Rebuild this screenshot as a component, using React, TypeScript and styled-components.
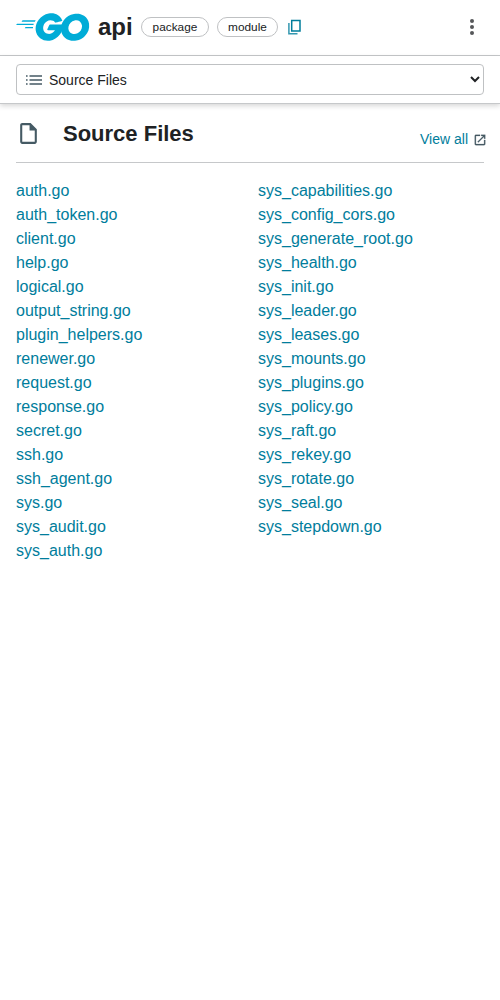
import React from "react";
import styled, { createGlobalStyle } from "styled-components";

const GlobalStyle = createGlobalStyle`
  *, *::before, *::after { box-sizing: border-box; }
  body {
    margin: 0;
    background: #fff;
    color: #202224;
    font-family: "Liberation Sans", Arial, sans-serif;
    font-size: 16px;
    line-height: 24px;
  }
`;

const Header = styled.header`
  height: 56px;
  padding: 0 16px 1px;
  display: flex;
  align-items: center;
  border-bottom: 1px solid #c6c8ca;
`;
const Logo = styled.svg`
  display: block;
  width: 73.5px;
  height: 28px;
  flex: none;
`;
const PackageName = styled.h1`
  margin: 0 8.5px;
  font-size: 24px;
  line-height: 30px;
  font-weight: 700;
`;
const Chip = styled.span`
  height: 20px;
  margin-right: 8px;
  padding: 0 10.4px;
  border: 1px solid #bfc1c3;
  border-radius: 10px;
  font-size: 11.84px;
  line-height: 18px;
`;
const IconButton = styled.button<{ $push?: boolean }>`
  display: flex;
  padding: 0;
  border: 0;
  background: none;
  margin: ${(p) => (p.$push ? "0 0 0 auto" : "0")};
`;
const NavBar = styled.nav`
  height: 48px;
  padding: 8px 16px;
  border-bottom: 1px solid #c6c8ca;
  box-shadow: 0 2px 5px rgba(0, 0, 0, 0.16);
`;
const SelectWrap = styled.div`
  position: relative;
`;
const SelectIcon = styled.svg`
  position: absolute;
  left: 8px;
  top: 6px;
  pointer-events: none;
`;
const Select = styled.select`
  display: block;
  width: 100%;
  height: 31px;
  padding: 0 0 0 28px;
  border: 1px solid #bfc1c3;
  border-radius: 4px;
  background: #fff;
  color: #202224;
  font: 14px "Liberation Sans", Arial, sans-serif;
`;
const Main = styled.main`
  padding: 0 16px;
`;
const SectionHead = styled.div`
  height: 59px;
  display: flex;
  align-items: center;
  border-bottom: 1px solid #c6c8ca;
`;
const Title = styled.h2`
  margin: 2px auto 0 22px;
  font-size: 22px;
  line-height: 28px;
  font-weight: 700;
`;
const ViewAll = styled.a`
  display: flex;
  align-items: center;
  gap: 5px;
  margin: 12px -3px 0 0;
  color: #007d9c;
  font-size: 14px;
  line-height: 20px;
`;
const ExternalIcon = styled.svg`
  display: block;
  margin-top: 1px;
`;
const FileList = styled.ul`
  margin: 16px 0 0;
  padding: 0;
  list-style: none;
  columns: 2;
  column-gap: 16px;
`;
const FileItem = styled.li`
  height: 24px;
  color: #007d9c;
`;

const files = [
  "auth.go", "auth_token.go", "client.go", "help.go", "logical.go", "output_string.go",
  "plugin_helpers.go", "renewer.go", "request.go", "response.go", "secret.go", "ssh.go",
  "ssh_agent.go", "sys.go", "sys_audit.go", "sys_auth.go", "sys_capabilities.go",
  "sys_config_cors.go", "sys_generate_root.go", "sys_health.go", "sys_init.go",
  "sys_leader.go", "sys_leases.go", "sys_mounts.go", "sys_plugins.go", "sys_policy.go",
  "sys_raft.go", "sys_rekey.go", "sys_rotate.go", "sys_seal.go", "sys_stepdown.go",
];

const GoLogo = () => (
  <Logo viewBox="0 0 207 78" preserveAspectRatio="none" fill="#00acd7" fillRule="evenodd" aria-label="Go">
    <path d="m16.2 24.1c-.4 0-.5-.2-.3-.5l2.1-2.7c.2-.3.7-.5 1.1-.5h35.7c.4 0 .5.3.3.6l-1.7 2.6c-.2.3-.7.6-1 .6z" />
    <path d="m1.1 33.3c-.4 0-.5-.2-.3-.5l2.1-2.7c.2-.3.7-.5 1.1-.5h45.6c.4 0 .6.3.5.6l-.8 2.4c-.1.4-.5.6-.9.6z" />
    <path d="m25.3 42.5c-.4 0-.5-.3-.3-.6l1.4-2.5c.2-.3.6-.6 1-.6h20c.4 0 .6.3.6.7l-.2 2.4c0 .4-.4.7-.7.7z" />
    <g transform="translate(55)">
      <path d="m74.1 22.3c-6.3 1.6-10.6 2.8-16.8 4.4-1.5.4-1.6.5-2.9-1-1.5-1.7-2.6-2.8-4.7-3.8-6.3-3.1-12.4-2.2-18.1 1.5-6.8 4.4-10.3 10.9-10.2 19 .1 8 5.6 14.6 13.5 15.7 6.8.9 12.5-1.5 17-6.6.9-1.1 1.7-2.3 2.7-3.7-3.6 0-8.1 0-19.3 0-2.1 0-2.6-1.3-1.9-3 1.3-3.1 3.7-8.3 5.1-10.9.3-.6 1-1.6 2.5-1.6h36.4c-.2 2.7-.2 5.4-.6 8.1-1.1 7.2-3.8 13.8-8.2 19.6-7.2 9.5-16.6 15.4-28.5 17-9.8 1.3-18.9-.6-26.9-6.6-7.4-5.6-11.6-13-12.7-22.2-1.3-10.9 1.9-20.7 8.5-29.3 7.1-9.3 16.5-15.2 28-17.3 9.4-1.7 18.4-.6 26.5 4.9 5.3 3.5 9.1 8.3 11.6 14.1.6.9.2 1.4-1 1.7z" />
      <path d="m107.2 77.6c-9.1-.2-17.4-2.8-24.4-8.8-5.9-5.1-9.6-11.6-10.8-19.3-1.8-11.3 1.3-21.3 8.1-30.2 7.3-9.6 16.1-14.6 28-16.7 10.2-1.8 19.8-.8 28.5 5.1 7.9 5.4 12.8 12.7 14.1 22.3 1.7 13.5-2.2 24.5-11.5 33.9-6.6 6.7-14.7 10.9-24 12.8-2.7.5-5.4.6-8 .9zm23.8-40.4c-.1-1.3-.1-2.3-.3-3.3-1.8-9.9-10.9-15.5-20.4-13.3-9.3 2.1-15.3 8-17.5 17.4-1.8 7.8 2 15.7 9.2 18.9 5.5 2.4 11 2.1 16.3-.6 7.9-4.1 12.2-10.5 12.7-19.5z" />
    </g>
  </Logo>
);

export default function App() {
  return (
    <>
      <GlobalStyle />
      <Header>
        <GoLogo />
        <PackageName>api</PackageName>
        <Chip>package</Chip>
        <Chip>module</Chip>
        <IconButton aria-label="Copy path">
          <svg width="16" height="16" viewBox="0 0 16 16" fill="none" stroke="#007d9c" strokeWidth="1.5">
            <path d="M5.700 1.500h8.300v10.500H5.700z" />
            <path d="M2.900 4v10.700h8.600" strokeOpacity="0.8" />
          </svg>
        </IconButton>
        <IconButton $push aria-label="More">
          <svg width="24" height="24" viewBox="0 0 24 24" fill="#555759">
            <circle cx="12" cy="6" r="2" />
            <circle cx="12" cy="12" r="2" />
            <circle cx="12" cy="18" r="2" />
          </svg>
        </IconButton>
      </Header>
      <NavBar>
        <SelectWrap>
          <Select aria-label="Section">
            <option>Source Files</option>
          </Select>
          <SelectIcon width="20" height="20" viewBox="0 0 20 20" fill="#455a64">
            <path d="M2 5.200h1.600v1.600H2zM2 9.200h1.600v1.600H2zM2 13.200h1.600v1.600H2zM5.500 5.200h12.500v1.600H5.500zM5.500 9.200h12.500v1.600H5.500zM5.500 13.200h12.500v1.600H5.500z" />
          </SelectIcon>
        </SelectWrap>
      </NavBar>
      <Main>
        <SectionHead>
          <svg width="25" height="25" viewBox="0 0 24 24" fill="#455a64">
            <path d="M14 2H6c-1.100 0-2 .9-2 2v16c0 1.100.9 2 2 2h12c1.100 0 2-.9 2-2V8l-6-6zM6 20V4h7v5h5v11H6z" />
          </svg>
          <Title>Source Files</Title>
          <ViewAll>
            View all
            <ExternalIcon width="14" height="14" viewBox="0 0 24 24" fill="#455a64">
              <path d="M19 19H5V5h7V3H5c-1.110 0-2 .9-2 2v14c0 1.100.89 2 2 2h14c1.100 0 2-.9 2-2v-7h-2v7zM14 3v2h3.590l-9.830 9.830 1.410 1.410L19 6.410V10h2V3h-7z" stroke="#455a64" strokeWidth="0.4" />
            </ExternalIcon>
          </ViewAll>
        </SectionHead>
        <FileList>
          {files.map((f) => (
            <FileItem key={f}>{f}</FileItem>
          ))}
        </FileList>
      </Main>
    </>
  );
}
